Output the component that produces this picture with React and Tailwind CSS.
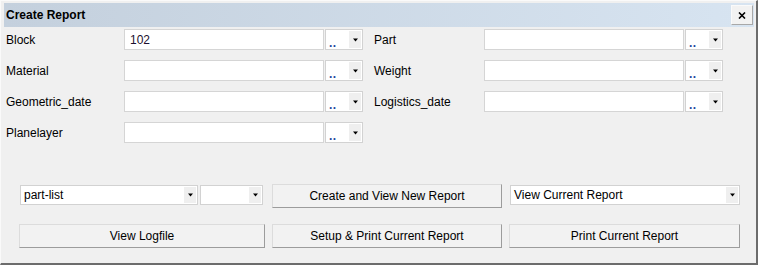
import React from "react";

const font = { fontFamily: '"Liberation Sans", Arial, sans-serif' };

function Arrow() {
  return (
    <svg width="7" height="4" viewBox="0 0 7 4">
      <path d="M1 0.5h5L3.5 3.5z" fill="#000" />
    </svg>
  );
}

// combo con texto y flecha a la derecha
function Combo({ text = "", dots = false, className = "" }) {
  return (
    <div
      className={`flex h-[20px] items-stretch border border-[#d2d2d2] bg-white ${className}`}
    >
      <div className="flex flex-1 items-center overflow-hidden pl-[3px] text-[12px] leading-none text-black">
        {dots ? (
          <span className="mt-[6px] text-[12px] font-bold tracking-[0.5px] text-[#24469e]">..</span>
        ) : (
          text
        )}
      </div>
      <div className="m-[1px] flex w-[12px] items-center justify-center bg-[#efefef]">
        <Arrow />
      </div>
    </div>
  );
}

function Campo({ label, value = "", labelW }) {
  return (
    <div className="flex h-[21px] items-center">
      <div className={`${labelW} text-[12px] text-black`}>{label}</div>
      <div className="flex h-[21px] w-[200px] items-center border border-[#d5d5d5] bg-white pl-[5px] text-[12px] text-[#1a0f2e]">
        {value}
      </div>
      <Combo dots className="ml-[1px] h-[21px] w-[38px]" />
    </div>
  );
}

function Boton({ children, className = "" }) {
  return (
    <button
      className={`flex h-[24px] items-center justify-center border border-t-[#dcdcdc] border-l-[#dcdcdc] border-r-[#9c9c9c] border-b-[#9c9c9c] bg-[#f2f2f2] text-[12px] text-black ${className}`}
    >
      {children}
    </button>
  );
}

export default function App() {
  const izquierda = [
    { label: "Block", value: "102" },
    { label: "Material" },
    { label: "Geometric_date" },
    { label: "Planelayer" },
  ];
  const derecha = [{ label: "Part" }, { label: "Weight" }, { label: "Logistics_date" }];

  return (
    <div
      style={font}
      className="flex h-[265px] w-[758px] flex-col border-l border-t border-[#fafafa] border-r-2 border-b-2 border-r-[#6c6c6c] border-b-[#6c6c6c] bg-[#f0f0f0]"
    >
      {/* Barra de titulo */}
      <div className="ml-[3px] mt-[2px] flex h-[24px] w-[750px] items-center justify-between bg-gradient-to-r from-[#c4d0dd] to-[#d7e4f1] pl-[2px] pr-[1px]">
        <span className="text-[12px] font-bold text-black">Create Report</span>
        <div className="flex h-[20px] w-[22px] items-center justify-center border border-t-[#fafafa] border-l-[#fafafa] border-r-[#a8a8a8] border-b-[#a8a8a8] bg-[#f2f2f2]">
          <svg width="8" height="7" viewBox="0 0 8 7">
            <path d="M1 0.5l6 6M7 0.5l-6 6" stroke="#000" strokeWidth="1.6" />
          </svg>
        </div>
      </div>

      {/* Formulario */}
      <div className="mt-[2px] flex pl-[5px]">
        <div className="flex flex-col gap-[10px]">
          {izquierda.map((c) => (
            <Campo key={c.label} label={c.label} value={c.value} labelW="w-[118px]" />
          ))}
        </div>
        <div className="ml-[11px] flex flex-col gap-[10px]">
          {derecha.map((c) => (
            <Campo key={c.label} label={c.label} labelW="w-[110px]" />
          ))}
        </div>
      </div>

      {/* Fila de acciones */}
      <div className="mt-[41px] flex items-start pl-[18px]">
        <Combo text="part-list" className="ml-[1px] mt-[1px] w-[178px]" />
        <Combo className="ml-[2px] mt-[1px] w-[63px]" />
        <Boton className="ml-[9px] w-[230px]">Create and View New Report</Boton>
        <Combo text="View Current Report" className="ml-[8px] mt-[1px] w-[230px]" />
      </div>

      <div className="mt-[16px] flex pl-[18px]">
        <Boton className="w-[246px]">View Logfile</Boton>
        <Boton className="ml-[7px] w-[230px]">Setup &amp; Print Current Report</Boton>
        <Boton className="ml-[7px] w-[231px]">Print Current Report</Boton>
      </div>
    </div>
  );
}
